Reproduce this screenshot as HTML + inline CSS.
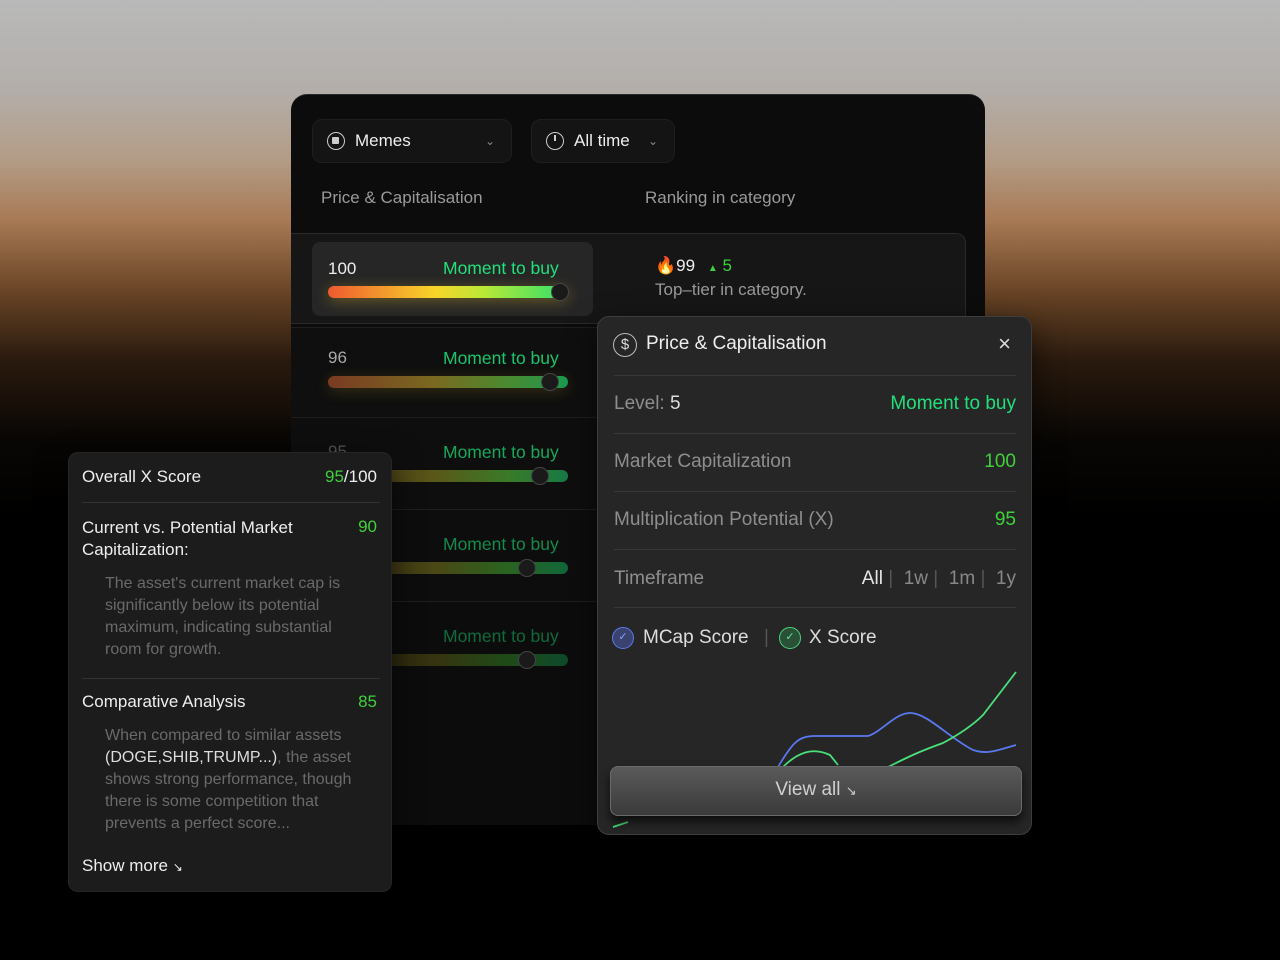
<!DOCTYPE html>
<html><head><meta charset="utf-8"><style>
*{box-sizing:border-box;margin:0;padding:0}
body{width:1280px;height:960px;overflow:hidden;position:relative;font-family:"Liberation Sans",sans-serif;
background:linear-gradient(180deg,#b9b9b9 0px,#b3aeaa 90px,#b39c86 160px,#a87a55 220px,#6a4526 290px,#2a1a0e 360px,#080604 440px,#000 520px);}
.abs{position:absolute}
.main{left:291px;top:94px;width:694px;height:731px;background:#0c0c0c;border-radius:16px;overflow:hidden;border-top:1px solid #2a2a2a}
.dd{position:absolute;top:24px;height:44px;background:#141414;border-radius:10px;border:1px solid #1e1e1e;color:#eee;font-size:17px;display:flex;align-items:center;padding-left:14px}
.dd .ic{width:18px;height:18px;border:1.5px solid #ccc;border-radius:50%;margin-right:10px;position:relative}
.hd{position:absolute;top:93px;color:#9a9a9a;font-size:17px}
.row{position:absolute;left:0;width:694px;border-top:1px solid #1e1e1e}
.num{position:absolute;left:37px;font-size:17px;color:#aaa}
.mtb{position:absolute;left:152px;font-size:17.5px;color:#19c46a}
.bar{position:absolute;left:37px;width:240px;height:12px;border-radius:6px}
.knob{position:absolute;width:18px;height:18px;border-radius:50%;background:#1a1a1a;border:1px solid #444}
.pop{left:597px;top:316px;width:435px;height:519px;background:#262626;border-radius:12px;border:1px solid #3d3d3d;box-shadow:0 10px 30px rgba(0,0,0,.6);overflow:hidden}
.prow{position:absolute;left:16px;width:402px;border-top:1px solid #383838;font-size:19px;color:#8e8e8e}
.card{left:68px;top:452px;width:324px;height:440px;background:#1c1c1c;border-radius:10px;border:1px solid #262626;box-shadow:0 10px 30px rgba(0,0,0,.6)}
.g{color:#3fd13a}
.sub{position:absolute;left:36px;width:258px;font-size:16px;line-height:22px;color:#6a6a6a}
</style></head><body>
<div class="abs main">
  <div class="dd" style="left:21px;width:200px"><span class="ic"><span style="position:absolute;left:4px;top:4px;width:7px;height:7px;background:#ccc;border-radius:1px"></span></span>Memes<span style="position:absolute;right:16px;color:#888;font-size:12px">&#8964;</span></div>
  <div class="dd" style="left:240px;width:144px"><span class="ic"><span style="position:absolute;left:7px;top:2px;width:1.5px;height:6px;background:#ccc"></span></span>All time<span style="position:absolute;right:16px;color:#888;font-size:12px">&#8964;</span></div>
  <div class="hd" style="left:30px">Price &amp; Capitalisation</div>
  <div class="hd" style="left:354px">Ranking in category</div>
  <div class="row" style="top:138px;height:91px;width:675px;background:#161616;border:1px solid #2a2a2a;border-left:none;border-radius:0 10px 0 0">
    <div style="position:absolute;left:21px;top:8px;width:281px;height:74px;background:#262626;border-radius:8px"></div>
    <div class="num" style="top:25px;color:#eee">100</div>
    <div class="mtb" style="top:24px;color:#22e07a">Moment to buy</div>
    <div class="bar" style="top:52px;background:linear-gradient(90deg,#ee5a30,#f8d62a 45%,#b8e838 65%,#2ee06a);box-shadow:0 3px 14px rgba(240,200,40,.35)"></div>
    <div class="knob" style="left:260px;top:49px"></div>
    <div style="position:absolute;left:364px;top:22px;font-size:17px;color:#eee">🔥99 <span style="color:#3fd13a;font-size:10px;margin-left:8px">▲</span> <span style="color:#3fd13a">5</span></div>
    <div style="position:absolute;left:364px;top:46px;font-size:17px;color:#999">Top–tier in category.</div>
  </div>
  <div class="row" style="top:232px;height:90px;background:#0f0f0f">
    <div class="num" style="top:20px">96</div><div class="mtb" style="top:20px">Moment to buy</div>
    <div class="bar" style="top:48px;width:240px;background:linear-gradient(90deg,#7a3a22,#7a6a20 45%,#4a8a30 75%,#1a9a50);box-shadow:0 3px 14px rgba(150,130,30,.3)"></div>
    <div class="knob" style="left:250px;top:45px"></div>
  </div>
  <div class="row" style="top:322px;height:92px;background:#0e0e0e">
    <div class="num" style="top:24px;color:#555">95</div><div class="mtb" style="top:24px;color:#16a85a">Moment to buy</div>
    <div class="bar" style="top:52px;background:linear-gradient(90deg,#3a2a14,#5a5818 45%,#3a7a28 75%,#167a44)"></div>
    <div class="knob" style="left:240px;top:49px"></div>
  </div>
  <div class="row" style="top:414px;height:92px;background:#0d0d0d">
    <div class="mtb" style="top:24px;color:#138a4a">Moment to buy</div>
    <div class="bar" style="top:52px;background:linear-gradient(90deg,#2a2010,#4a4814 45%,#2a6420 75%,#12663a)"></div>
    <div class="knob" style="left:227px;top:49px"></div>
  </div>
  <div class="row" style="top:506px;height:225px;background:#0c0c0c">
    <div class="mtb" style="top:24px;color:#0e6a3a">Moment to buy</div>
    <div class="bar" style="top:52px;background:linear-gradient(90deg,#1e180c,#363410 45%,#1e4a18 75%,#0e4a2c)"></div>
    <div class="knob" style="left:227px;top:49px"></div>
  </div>
</div>

<div class="abs pop">
  <div style="position:absolute;left:15px;top:16px;width:24px;height:24px;border:1.5px solid #bbb;border-radius:50%;color:#ddd;font-size:15px;text-align:center;line-height:21px">$</div>
  <div style="position:absolute;left:48px;top:16px;font-size:19px;color:#eee">Price &amp; Capitalisation</div>
  <div style="position:absolute;right:20px;top:14px;font-size:22px;color:#ddd">×</div>
  <div class="prow" style="top:58px;height:58px"><span style="position:absolute;top:17px">Level: <span style="color:#ddd">5</span></span><span style="position:absolute;right:0;top:17px;color:#22e07a">Moment to buy</span></div>
  <div class="prow" style="top:116px;height:58px"><span style="position:absolute;top:17px">Market Capitalization</span><span class="g" style="position:absolute;right:0;top:17px">100</span></div>
  <div class="prow" style="top:174px;height:58px"><span style="position:absolute;top:17px">Multiplication Potential (X)</span><span class="g" style="position:absolute;right:0;top:17px">95</span></div>
  <div class="prow" style="top:232px;height:58px"><span style="position:absolute;top:18px">Timeframe</span><span style="position:absolute;right:0;top:18px;color:#888"><span style="color:#e6e6e6">All</span> <span style="color:#555">|</span> &nbsp;1w <span style="color:#555">|</span> &nbsp;1m <span style="color:#555">|</span> &nbsp;1y</span></div>
  <div class="prow" style="top:290px;height:60px;color:#ddd">
    <span style="position:absolute;left:-2px;top:19px;width:22px;height:22px;border:1.5px solid #5a7af0;background:#3a4270;border-radius:50%;color:#8aa0ff;font-size:11px;text-align:center;line-height:19px">✓</span>
    <span style="position:absolute;left:29px;top:19px">MCap Score</span>
    <span style="position:absolute;left:150px;top:19px;color:#555">|</span>
    <span style="position:absolute;left:165px;top:19px;width:22px;height:22px;border:1.5px solid #4ad27a;background:#2a5038;border-radius:50%;color:#6ae09a;font-size:11px;text-align:center;line-height:19px">✓</span>
    <span style="position:absolute;left:195px;top:19px">X Score</span>
  </div>
  <svg style="position:absolute;left:0;top:340px" width="435" height="180">
    <path d="M180 110 C195 85,200 80,215 79 L270 79 C285 74,298 55,313 56 C330 57,350 80,375 93 C390 98,400 93,418 88" stroke="#5a78f0" stroke-width="1.8" fill="none"/>
    <path d="M185 110 C200 95,215 90,232 98 L240 108 M290 110 C310 100,320 95,345 86 C360 78,375 68,385 58 C395 45,405 32,418 15" stroke="#4ae07a" stroke-width="1.8" fill="none"/>
    <path d="M15 170 L30 165" stroke="#4ae07a" stroke-width="1.8"/>
  </svg>
  <div style="position:absolute;left:12px;top:449px;width:412px;height:50px;border-radius:8px;background:linear-gradient(180deg,#5a5a5a,#3a3a3a);border:1px solid #6a6a6a;box-shadow:0 6px 10px rgba(0,0,0,.7);color:#d0d0d0;font-size:19px;text-align:center;line-height:46px">View all <span style="font-size:13px">↘</span></div>
</div>

<div class="abs card">
  <div style="position:absolute;left:13px;top:14px;font-size:17px;color:#eee">Overall X Score</div>
  <div style="position:absolute;right:14px;top:14px;font-size:17px;color:#eee"><span class="g">95</span>/100</div>
  <div style="position:absolute;left:13px;top:49px;width:298px;border-top:1px solid #333"></div>
  <div style="position:absolute;left:13px;top:64px;font-size:17px;line-height:22px;color:#eee;width:230px">Current vs. Potential Market Capitalization:</div>
  <div class="g" style="position:absolute;right:14px;top:64px;font-size:17px">90</div>
  <div class="sub" style="top:120px">The asset's current market cap is significantly below its potential maximum, indicating substantial room for growth.</div>
  <div style="position:absolute;left:13px;top:225px;width:298px;border-top:1px solid #333"></div>
  <div style="position:absolute;left:13px;top:239px;font-size:17px;color:#eee">Comparative Analysis</div>
  <div class="g" style="position:absolute;right:14px;top:239px;font-size:17px">85</div>
  <div class="sub" style="top:272px">When compared to similar assets <span style="color:#ddd">(DOGE,SHIB,TRUMP...)</span>, the asset shows strong performance, though there is some competition that prevents a perfect score...</div>
  <div style="position:absolute;left:13px;top:403px;font-size:17px;color:#eee">Show more <span style="font-size:12px">↘</span></div>
</div>
</body></html>
